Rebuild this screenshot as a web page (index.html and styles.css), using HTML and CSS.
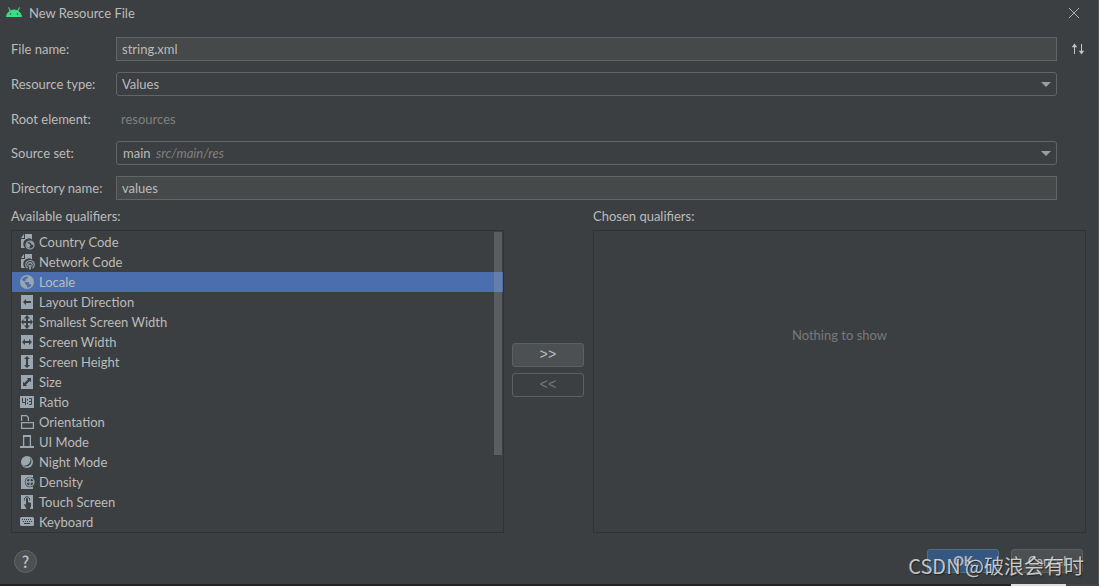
FILE: index.html
```html
<!DOCTYPE html>
<html lang="en">
<head>
<meta charset="utf-8">
<title>New Resource File</title>
<link rel="stylesheet" href="styles.css">
</head>
<body>
<main class="dialog">
  <header class="titlebar">
    <svg class="robot" width="16" height="16" viewBox="0 0 16 16"><path d="M0 12a8 8 0 0 1 3.600-6.100L2 2.600l.9-.4 1.600 3.100a8.600 8.600 0 0 1 7 0l1.600-3.100.9.400-1.600 3.300A8 8 0 0 1 16 12z" fill="#3ddc84"/><circle cx="4.500" cy="9" r=".8" fill="#3c3f41"/><circle cx="11.500" cy="9" r=".8" fill="#3c3f41"/></svg>
    <h1 class="title">New Resource File</h1>
    <button class="close" aria-label="Close"><svg width="10" height="10" viewBox="0 0 10 10"><path d="M0 0l10 10M10 0L0 10" stroke="#afb1b3" fill="none"/></svg></button>
  </header>

  <form class="form">
    <label for="file">File name:</label>
    <input class="field" id="file" type="text" value="string.xml">
    <button class="swap" type="button" aria-label="Reorder"><svg width="14" height="12" viewBox="0 0 14 12"><path d="M3.500 11V3M10.500 1v8" stroke="#c4c6c7" fill="none"/><path d="M.800 4.200L3.500.600l2.700 3.600zM7.800 7.800l2.700 3.600 2.700-3.600z" fill="#c4c6c7"/></svg></button>

    <label for="type">Resource type:</label>
    <div class="combo"><select class="field select" id="type"><option>Values</option></select><span class="arrow"></span></div>

    <span class="root-label">Root element:</span>
    <output class="root">resources</output>

    <label for="source">Source set:</label>
    <div class="combo"><select class="field select source" id="source"><option>main</option></select><span class="hint">src/main/res</span><span class="arrow"></span></div>

    <label for="dir">Directory name:</label>
    <input class="field" id="dir" type="text" value="values">
  </form>

  <section class="qualifiers">
    <div class="column">
      <h2 class="heading" id="available">Available qualifiers:</h2>
      <div class="panel">
        <ul class="list" role="listbox" aria-labelledby="available">
          <li class="item" role="option"><svg class="icon" viewBox="0 0 16 16"><path d="M6 0h7v5.500A5.300 5.300 0 0 0 6.300 14H2V5h4zM2 4l3-4v4z" fill="#9aa7b0"/><circle cx="11" cy="11" r="4" fill="none" stroke="#9aa7b0" stroke-width="1.200"/><path d="M8 9l2 .5 1.500 2-1 1v2L8 12.500zM11 7l3 1.500.500 2.500-2-.5-.500-1.500-1.500-.500z" fill="#9aa7b0"/></svg>Country Code</li>
          <li class="item" role="option"><svg class="icon" viewBox="0 0 16 16"><path d="M6 0h7v5.500A5.300 5.300 0 0 0 6.300 14H2V5h4zM2 4l3-4v4z" fill="#9aa7b0"/><path d="M8.600 14.300a4.300 4.300 0 1 1 4.800 0M9.500 12.400a2.200 2.200 0 1 1 3 0" fill="none" stroke="#9aa7b0" stroke-width="1.100"/><path d="M10.200 11h1.600v4.500h-1.600z" fill="#9aa7b0"/></svg>Network Code</li>
          <li class="item selected" role="option" aria-selected="true"><svg class="icon" viewBox="0 0 16 16"><circle cx="8" cy="8" r="6.300" fill="none" stroke="#9aa7b0" stroke-width="1.400"/><path d="M2 5l4 3.500v1.500l2 1.500V14C4 14 1 10.500 2 5zM9 2v2L7 5v1.500L5.500 7v1H10v2h1.500l1.200 2C15 9 15 3.500 9 2z" fill="#9aa7b0"/></svg>Locale</li>
          <li class="item" role="option"><svg class="icon" viewBox="0 0 16 16"><path d="M2 1h12v14H2z" fill="#9aa7b0"/><path d="M4 8l3-3v2h5v2H7v2z" fill="#3c3f41"/></svg>Layout Direction</li>
          <li class="item" role="option"><svg class="icon" viewBox="0 0 16 16"><path d="M2 1h12v14H2z" fill="#9aa7b0"/><path d="M8 1l3 3.500H9V7h2.500V5L14 8l-2.500 3V9H9v2.500h2L8 15l-3-3.500h2V9H4.500v2L2 8l2.500-3v2H7V4.500H5z" fill="#3c3f41"/></svg>Smallest Screen Width</li>
          <li class="item" role="option"><svg class="icon" viewBox="0 0 16 16"><path d="M2 1h12v14H2z" fill="#9aa7b0"/><path d="M3 8l3-3v2h4V5l3 3-3 3V9H6v2z" fill="#3c3f41"/></svg>Screen Width</li>
          <li class="item" role="option"><svg class="icon" viewBox="0 0 16 16"><path d="M2 1h12v14H2z" fill="#9aa7b0"/><path d="M8 2l3 3H9v6h2l-3 3-3-3h2V5H5z" fill="#3c3f41"/></svg>Screen Height</li>
          <li class="item" role="option"><svg class="icon" viewBox="0 0 16 16"><path d="M2 1h12v14H2z" fill="#9aa7b0"/><path d="M12 4v4.200l-1.300-1.300-3.800 3.800L8.200 12H4V7.800l1.300 1.300 3.800-3.800L7.800 4z" fill="#3c3f41"/></svg>Size</li>
          <li class="item" role="option"><svg class="icon" viewBox="0 0 16 16"><path d="M1 2h14v12H1z" fill="#9aa7b0"/><path d="M3.500 4v4.500H6M6.500 4v7M10 4.500h2.500v6H10M10 7.500h2.500" fill="none" stroke="#3c3f41"/><path d="M8 5h1v1.500H8zM8 8.500h1V10H8z" fill="#3c3f41"/></svg>Ratio</li>
          <li class="item" role="option"><svg class="icon" viewBox="0 0 16 16"><path d="M2.600 7V1.600h4.900l1.900 2V7M2.600 8.600h11.800v5.800H2.600z" fill="none" stroke="#9aa7b0" stroke-width="1.300"/></svg>Orientation</li>
          <li class="item" role="option"><svg class="icon" viewBox="0 0 16 16"><path d="M4.600 12V1.600h6.800V12" fill="none" stroke="#9aa7b0" stroke-width="1.300"/><path d="M4 1h8v2H4zM1 12h14v2H1z" fill="#9aa7b0"/></svg>UI Mode</li>
          <li class="item" role="option"><svg class="icon" viewBox="0 0 16 16"><circle cx="8" cy="8" r="6" fill="#9aa7b0"/><path d="M11 3.300A6 6 0 0 1 3.500 11.300 5.500 5.500 0 0 0 11 3.300z" fill="#3c3f41"/></svg>Night Mode</li>
          <li class="item" role="option"><svg class="icon" viewBox="0 0 16 16"><path d="M2 1h12v14H2z" fill="#9aa7b0"/><circle cx="11" cy="8" r="5.300" fill="#3c3f41"/><circle cx="11" cy="8" r="4" fill="none" stroke="#9aa7b0" stroke-width="1.300"/><path d="M11 4v8M7 8h8" stroke="#9aa7b0" stroke-width="1.300"/></svg>Density</li>
          <li class="item" role="option"><svg class="icon" viewBox="0 0 16 16"><path d="M2 1h12v14H2z" fill="#9aa7b0"/><path d="M5.500 6.500a2.700 2.700 0 1 1 5 0" fill="none" stroke="#3c3f41"/><path d="M7 4.500q1-1.300 2 0V8l3 1v3l-1 3H7.500L5 10.500 6 10l1 1z" fill="#3c3f41"/></svg>Touch Screen</li>
          <li class="item" role="option"><svg class="icon" viewBox="0 0 16 16"><rect x="1" y="3" width="14" height="9" rx="1.500" fill="#9aa7b0"/><path d="M3 5.500h10M4 7.500h9" stroke="#3c3f41" stroke-dasharray="1 1"/><path d="M5 9.500h6" stroke="#3c3f41"/></svg>Keyboard</li>
        </ul>
        <span class="scrollbar"></span>
      </div>
    </div>
    <div class="move">
      <button class="button shift" type="button">&gt;&gt;</button>
      <button class="button shift" type="button" disabled>&lt;&lt;</button>
    </div>
    <div class="column">
      <h2 class="heading">Chosen qualifiers:</h2>
      <div class="panel empty">Nothing to show</div>
    </div>
  </section>

  <footer class="footer">
    <button class="help" type="button" aria-label="Help">?</button>
    <button class="button primary" type="button">OK</button>
    <button class="button" type="button">Cancel</button>
    <span class="watermark">CSDN @破浪会有时</span>
  </footer>
</main>
<div class="backdrop"></div>
</body>
</html>
```
FILE: styles.css
```css
* { box-sizing: border-box; }

body {
  margin: 0;
  min-height: 100vh;
  display: flex;
  flex-direction: column;
  background: #3c3f41;
  color: #bbbbbb;
  font: 13px/20px Lato, "Noto Sans CJK SC", sans-serif;
}

button, input, select { font: inherit; color: inherit; margin: 0; }
button { padding: 0; border: 0; background: none; }

.dialog {
  flex: 1;
  display: flex;
  flex-direction: column;
  border-right: 1px solid #55585a;
}

.titlebar {
  display: flex;
  align-items: center;
  height: 25px;
  padding: 0 19px 0 6px;
}
.title { flex: 1; margin: 0 0 0 7px; font-size: 13px; font-weight: 400; }
.close { display: flex; }

.form {
  display: grid;
  grid-template-columns: 105px 1fr 41px;
  gap: 11px 0;
  align-items: center;
  padding: 12px 0 0 11px;
}
.form > label, .root-label { grid-column: 1; }
.field {
  width: 100%;
  height: 24px;
  padding: 0 5px;
  border: 1px solid #646464;
  background: #45494a;
}
.select {
  display: block;
  appearance: none;
  border-radius: 3px;
  background: #3c3f41;
}
.source { padding-left: 6px; }
.combo { position: relative; }
.arrow {
  position: absolute;
  right: 6px;
  top: 10px;
  border: 5px solid transparent;
  border-top-color: #9a9da0;
  border-bottom: 0;
  pointer-events: none;
}
.hint {
  position: absolute;
  left: 40px;
  top: 2px;
  color: #808080;
  font-style: italic;
  pointer-events: none;
}
.root { height: 23px; padding: 2px 5px; color: #808080; }
.swap { display: flex; justify-self: center; }

.qualifiers {
  flex: 1;
  display: grid;
  grid-template-columns: 1fr 89px 1fr;
  padding: 6px 12px 0 11px;
}
.column { display: flex; flex-direction: column; }
.heading { margin: 0 0 4px; font-size: 13px; font-weight: 400; }
.panel { flex: 1; position: relative; border: 1px solid #323232; }
.list { margin: 0; padding: 1px 0 0; list-style: none; }
.item { display: flex; align-items: center; gap: 4px; height: 20px; padding-left: 7px; }
.selected { background: #4b6eaf; }
.icon { width: 16px; height: 16px; }
.scrollbar {
  position: absolute;
  top: 1px;
  right: 1px;
  width: 8px;
  height: 74%;
  background: rgba(166, 166, 166, .3);
}
.empty { display: grid; place-items: center; padding-bottom: 94px; color: #777a7c; }

.move { display: flex; flex-direction: column; justify-content: center; padding-left: 8px; gap: 6px; }
.button {
  width: 72px;
  height: 24px;
  border: 1px solid #5e6060;
  border-radius: 3px;
  background: #4c5052;
  line-height: 22px;
}
.button:disabled { background: transparent; color: #777777; }
.shift { font-family: "Liberation Mono", monospace; font-size: 14px; }
.primary { border-color: #4c708c; background: #365880; font-weight: 700; }

.footer {
  position: relative;
  display: flex;
  align-items: center;
  gap: 12px;
  padding: 16px 15px 11px 14px;
}
.help {
  width: 23px;
  height: 23px;
  margin-right: auto;
  border: 1px solid #646767;
  border-radius: 50%;
  background: #4c5052;
  font-family: "Noto Sans CJK SC", sans-serif;
  font-size: 16px;
  font-weight: 500;
  line-height: 20px;
}
.watermark {
  position: absolute;
  right: 14px;
  top: 18px;
  color: rgba(255, 255, 255, .72);
  font-family: "Noto Sans CJK SC", sans-serif;
  font-size: 20px;
  line-height: 30px;
  text-shadow: 1px 1px 1px #222222;
  white-space: nowrap;
  pointer-events: none;
}

.backdrop {
  height: 2px;
  background: linear-gradient(90deg, #242222 0 92%, #dddddd 92% 97%, #444444 97%);
}
```
